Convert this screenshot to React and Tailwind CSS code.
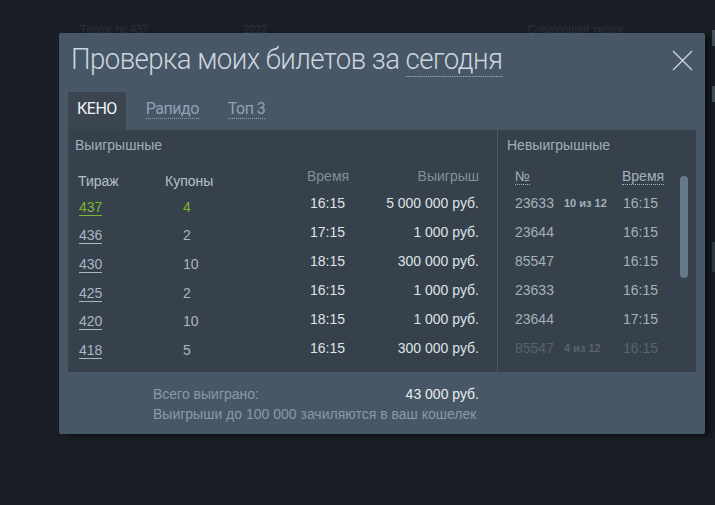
const winners = [
  { draw: '437', coupons: '4', time: '16:15', prize: '5 000 000 руб.', hot: true },
  { draw: '436', coupons: '2', time: '17:15', prize: '1 000 руб.' },
  { draw: '430', coupons: '10', time: '18:15', prize: '300 000 руб.' },
  { draw: '425', coupons: '2', time: '16:15', prize: '1 000 руб.' },
  { draw: '420', coupons: '10', time: '18:15', prize: '1 000 руб.' },
  { draw: '418', coupons: '5', time: '16:15', prize: '300 000 руб.' },
];

const losers = [
  { num: '23633', hits: '10 из 12', time: '16:15' },
  { num: '23644', time: '16:15' },
  { num: '85547', time: '16:15' },
  { num: '23633', time: '16:15' },
  { num: '23644', time: '17:15' },
  { num: '85547', hits: '4 из 12', time: '16:15', faded: true },
];

const narrow = { fontFamily: 'Roboto, "DejaVu Sans Condensed", sans-serif' };

const CloseIcon = () => (
  <svg width="21" height="21" viewBox="0 0 21 21" className="mt-[9px] shrink-0">
    <path d="M1 1L20 20M20 1L1 20" stroke="#c9d3dc" strokeWidth="1.4" fill="none" />
  </svg>
);

const App = () => {
  return (
    <div
      className="relative w-[715px] h-[505px] overflow-hidden bg-[#1a1f27]"
      style={{ fontFamily: '"Liberation Sans", Arial, sans-serif' }}
    >
      {/* page content behind the dialog */}
      <div className="flex items-center h-[44px] pt-[14px] text-[11px] text-[#2a323c]">
        <span className="ml-[80px]">Тираж № 437</span>
        <span className="ml-[95px]">2222</span>
        <span className="ml-[260px]">Следующий тираж</span>
      </div>
      <div className="absolute right-0 top-[30px] w-[6px] h-[300px] flex flex-col gap-[40px] items-end">
        <div className="w-[3px] h-[16px] bg-[#4a5561]" />
        <div className="w-[3px] h-[16px] bg-[#4a5561]" />
        <div className="w-[3px] h-[30px] mt-[100px] bg-[#353f4a]" />
      </div>

      <div className="absolute left-[59px] top-[33px] w-[646px] h-[401px] bg-[#475766] rounded-[2px] shadow-[6px_2px_6px_rgba(0,0,0,0.55)] flex flex-col">
        <div className="flex justify-between pl-[12px] pr-[12px] pt-[8px]">
          <h1
            className="text-[30px] leading-[36px] tracking-[-0.6px] font-light text-[#ccd5dd] whitespace-nowrap origin-left scale-x-[0.92]"
            style={narrow}
          >
            Проверка моих билетов за{' '}
            <span className="border-b border-dotted border-[#aab7c2]">сегодня</span>
          </h1>
          <CloseIcon />
        </div>

        <div className="flex mt-[15px] ml-[9px] h-[38px] text-[16px] leading-[18px] tracking-[-0.5px]" style={narrow}>
          <div className="bg-[#3a4550] px-[9px] pt-[8px] text-[#f1f4f6]">КЕНО</div>
          <div className="ml-[20px] pt-[8px] text-[#8ea2b2]">
            <span className="border-b border-dotted border-[#8ea2b2]">Рапидо</span>
          </div>
          <div className="ml-[29px] pt-[8px] text-[#8ea2b2]">
            <span className="border-b border-dotted border-[#8ea2b2]">Топ 3</span>
          </div>
        </div>

        <div className="mx-[9px] h-[242px] bg-[#36414b] flex overflow-hidden">
          <div className="w-[429px] shrink-0">
            <div className="pl-[7px] pt-[7px] text-[14px] leading-[16px] text-[#9eafbc]">Выигрышные</div>
            <div className="flex">
              <div className="w-[225px] mt-[16px] pl-[10px] text-[14px]">
                <div className="flex h-[24px] items-center text-[#b4c1cb]">
                  <span className="w-[87px]">Тираж</span>
                  <span>Купоны</span>
                </div>
                {winners.map((row) => (
                  <div key={row.draw} className="flex h-[28.6px] items-center">
                    <span className="w-[105px] pl-[1px]">
                      <span className={`border-b ${row.hot ? 'text-[#7cb82f] border-[#7cb82f]' : 'text-[#a8b7c2] border-[#a8b7c2]'}`}>
                        {row.draw}
                      </span>
                    </span>
                    <span className={row.hot ? 'text-[#7cb82f]' : 'text-[#a8b7c2]'}>{row.coupons}</span>
                  </div>
                ))}
              </div>
              <div className="w-[172px] ml-[14px] mt-[10px] text-[14px]">
                <div className="flex h-[26px] items-center justify-between text-[#7f909d]">
                  <span>Время</span>
                  <span>Выигрыш</span>
                </div>
                {winners.map((row) => (
                  <div key={row.draw} className="flex h-[29px] items-center justify-between text-[#dde3e8]">
                    <span className="pl-[3px]">{row.time}</span>
                    <span>{row.prize}</span>
                  </div>
                ))}
              </div>
            </div>
          </div>

          <div className="flex-1 border-l border-[#4b5963] relative">
            <div className="pl-[9px] pt-[7px] text-[14px] leading-[16px] text-[#9eafbc]">Невыигрышные</div>
            <div className="mt-[10px] pl-[17px] text-[14px] w-[170px]">
              <div className="flex h-[26px] items-center text-[#a3b1bc]">
                <span className="w-[107px]">
                  <span className="border-b border-dotted border-[#a3b1bc]">№</span>
                </span>
                <span className="border-b border-dotted border-[#a3b1bc] leading-[16px]">Время</span>
              </div>
              {losers.map((row, i) => (
                <div key={i} className={`flex h-[29px] items-center text-[#a3b1bc] ${row.faded ? 'opacity-30' : ''}`}>
                  <span className="w-[49px]">{row.num}</span>
                  <span className="w-[59px] text-[11px] font-bold">{row.hits}</span>
                  <span>{row.time}</span>
                </div>
              ))}
            </div>
            <div className="absolute left-[182px] top-[46px] w-[8px] h-[102px] rounded-full bg-[#667988]" />
          </div>
        </div>

        <div className="ml-[94px] w-[326px] mt-[12px] text-[14px] leading-[20px]">
          <div className="flex justify-between">
            <span className="text-[#8a9aa7]">Всего выиграно:</span>
            <span className="text-[#e8ecef]">43 000 руб.</span>
          </div>
          <div className="text-[#8a9aa7] whitespace-nowrap">Выигрыши до 100 000 зачиляются в ваш кошелек</div>
        </div>
      </div>
    </div>
  );
};

export default App;
